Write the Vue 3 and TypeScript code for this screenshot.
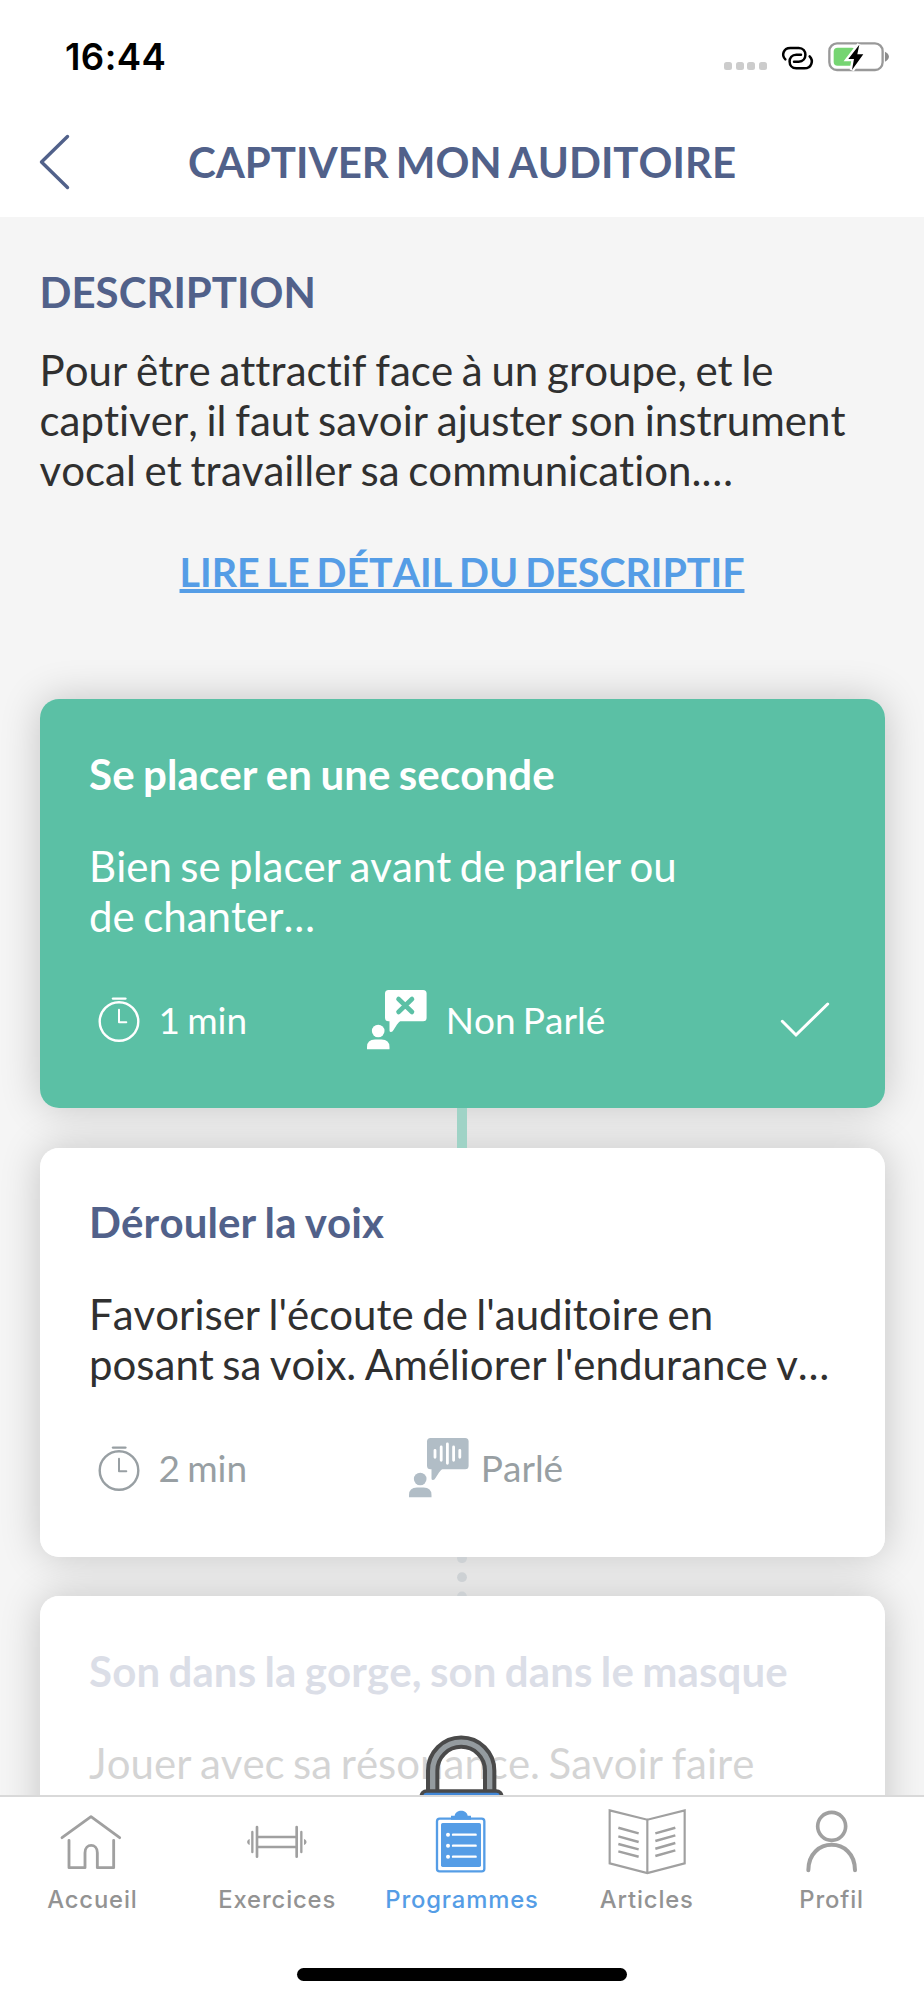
<script setup lang="ts">
interface Lesson {
  title: string
  lines: string[]
  duration?: string
  mode?: 'silent' | 'spoken'
  state: 'done' | 'open' | 'locked'
}

interface Tab {
  id: string
  label: string
  viewBox: string
}

const description: string[] = [
  'Pour être attractif face à un groupe, et le',
  'captiver, il faut savoir ajuster son instrument',
  'vocal et travailler sa communication.…',
]

const lessons: Lesson[] = [
  {
    title: 'Se placer en une seconde',
    lines: ['Bien se placer avant de parler ou', 'de chanter…'],
    duration: '1 min',
    mode: 'silent',
    state: 'done',
  },
  {
    title: 'Dérouler la voix',
    lines: ["Favoriser l'écoute de l'auditoire en", "posant sa voix. Améliorer l'endurance v…"],
    duration: '2 min',
    mode: 'spoken',
    state: 'open',
  },
  {
    title: 'Son dans la gorge, son dans le masque',
    lines: ['Jouer avec sa résonance. Savoir faire'],
    state: 'locked',
  },
]

const tabs: Tab[] = [
  { id: 'home', label: 'Accueil', viewBox: '157 715 240 200' },
  { id: 'exercises', label: 'Exercices', viewBox: '711 715 240 200' },
  { id: 'programs', label: 'Programmes', viewBox: '66 325 240 200' },
  { id: 'articles', label: 'Articles', viewBox: '620 325 240 200' },
  { id: 'profile', label: 'Profil', viewBox: '988 715 240 200' },
]

const activeTab = 'programs'
</script>

<template>
  <div class="screen">
    <header class="top">
      <div class="status">
        <span class="time">16:44</span>
        <div class="indicators">
          <div class="signal"><i v-for="n in 4" :key="n"></i></div>
          <svg class="link-icon" viewBox="955 130 105 85" fill="none" stroke="#000" stroke-width="7.5" stroke-linecap="round">
            <path d="M971 179C959 168 964 145 986 145H1011C1038 145 1038 186 1011 186H997" />
            <path d="M1044 170C1056 182 1051 206 1028 206H1004C977 206 977 165 1004 165H1018" />
          </svg>
          <svg class="battery" viewBox="1095 120 190 100">
            <rect x="1102" y="130" width="160" height="80" rx="23" fill="none" stroke="#999" stroke-width="7" />
            <path d="M1269 155C1276 158 1281 164 1281 170S1276 182 1269 185Z" fill="#8c8c8c" />
            <rect x="1115" y="143" width="66" height="54" rx="12" fill="#76d572" />
            <path d="M1192 134L1159 177H1176L1170 210L1204 163H1186Z" fill="#000" stroke="#fff" stroke-width="14" paint-order="stroke" />
          </svg>
        </div>
      </div>
      <div class="bar">
        <svg class="back" viewBox="0 0 34 58" fill="none" stroke="#51618a" stroke-width="3.4" stroke-linecap="round" stroke-linejoin="round">
          <path d="M30.5 3.5L4.5 29L30.5 54.5" />
        </svg>
        <h1>CAPTIVER MON AUDITOIRE</h1>
      </div>
    </header>

    <main>
      <h2>DESCRIPTION</h2>
      <p class="intro"><span v-for="line in description" :key="line">{{ line }}</span></p>
      <a class="more">LIRE LE DÉTAIL DU DESCRIPTIF</a>

      <section class="lessons">
        <template v-for="(lesson, i) in lessons" :key="lesson.title">
          <div v-if="i === 1" class="joint solid"></div>
          <svg v-if="i === 2" class="joint dotted" viewBox="0 0 10 40">
            <circle cx="5" cy="1.2" r="5" /><circle cx="5" cy="20.4" r="5" /><circle cx="5" cy="40" r="5" />
          </svg>
          <article class="card" :class="lesson.state">
            <h3>{{ lesson.title }}</h3>
            <p><span v-for="line in lesson.lines" :key="line">{{ line }}</span></p>
            <div v-if="lesson.duration" class="meta">
              <div class="duration">
                <svg class="clock" viewBox="0 0 42 46" fill="none" stroke="currentColor" stroke-linecap="round" stroke-linejoin="round">
                  <circle cx="21" cy="25.5" r="19.3" stroke-width="2.4" />
                  <path d="M15 2.6H27.4" stroke-width="2.4" />
                  <path d="M21 13.7V26.2H28.3" stroke-width="2" />
                </svg>
                <span>{{ lesson.duration }}</span>
              </div>
              <div class="mode" :class="lesson.mode">
                <svg class="speech" viewBox="0 0 60 60" fill="currentColor">
                  <rect x="18" y="0" width="41.6" height="31.3" rx="3.5" />
                  <path d="M22.5 30V40.5Q22.5 42 24 42Q25.5 42 26.5 40L30 34.5Q32 31.5 34.5 30Z" />
                  <circle cx="11.2" cy="41" r="6.3" />
                  <path d="M0 59.3V57Q0 49.5 8 49.5H14.5Q22.5 49.5 22.5 57V59.3Z" />
                  <path v-if="lesson.mode === 'silent'" d="M31.5 9L45 22M45 9L31.5 22" stroke="#5bc0a5" stroke-width="4.6" stroke-linecap="round" />
                  <path v-else d="M26 12.3V19.3M32.2 9V22.3M38.4 6V25.3M44.6 9V22.3M50.8 12.3V19.3" stroke="#fff" stroke-width="2.8" stroke-linecap="round" />
                </svg>
                <span>{{ lesson.mode === 'silent' ? 'Non Parlé' : 'Parlé' }}</span>
              </div>
              <svg v-if="lesson.state === 'done'" class="check" viewBox="0 0 50 36" fill="none" stroke="#fff" stroke-width="3" stroke-linecap="round">
                <path d="M2.3 19.3L16 33L47.7 2" />
              </svg>
            </div>
            <svg v-if="lesson.state === 'locked'" class="lock" viewBox="55 100 260 240">
              <path d="M99 275V213A85.5 85.5 0 0 1 270 213V275" fill="none" stroke="#4a4a4a" stroke-width="40" />
              <path d="M99 275V213A85.5 85.5 0 0 1 270 213V275" fill="none" stroke="#949b9f" stroke-width="16" />
              <rect x="65" y="274" width="241" height="180" rx="16" fill="#4287d6" stroke="#4a4a4a" stroke-width="11" />
            </svg>
          </article>
        </template>
      </section>
    </main>

    <nav>
      <div class="tabs">
        <a v-for="tab in tabs" :key="tab.id" :class="{ active: tab.id === activeTab }">
          <svg :viewBox="tab.viewBox" fill="none" stroke="#a0a0a0" stroke-width="8.5" stroke-linecap="round" stroke-linejoin="round">
            <template v-if="tab.id === 'home'">
              <path d="M187 804L274 741L360 804" />
              <path d="M208 812V894H256V849C256 820 293 820 293 849V894H342V812" />
            </template>
            <template v-else-if="tab.id === 'exercises'">
              <path d="M771 772V861M890 772V861M771 802H890M771 832H890" stroke-width="8" />
              <path d="M757 787V847M904 787V847" stroke-width="7" />
              <path d="M749 808C739 811 739 823 749 826ZM912 808C922 811 922 823 912 826Z" fill="#a0a0a0" stroke="none" />
            </template>
            <template v-else-if="tab.id === 'programs'">
              <rect x="111" y="357" width="142" height="158" rx="8" stroke="#559de6" stroke-width="7" />
              <path d="M153 360V348H164C167 328 200 328 203 348H213V360Z" fill="#559de6" stroke="none" />
              <rect x="123" y="370" width="120" height="132" rx="5" fill="#559de6" stroke="none" />
              <path d="M159 405H227M159 438H227M159 471H227" stroke="#fff" stroke-width="7" />
              <path d="M144 405h.1M144 438h.1M144 471h.1" stroke="#fff" stroke-width="12" />
            </template>
            <template v-else-if="tab.id === 'articles'">
              <path d="M628 332L741 360L853 332V491L741 520L628 491ZM741 360V520" stroke-width="6.5" stroke-linejoin="miter" />
              <path d="M654 384L715 401M654 410L715 427M654 433L715 449M654 455L715 471M765 401L825 384M765 424L825 407M765 447L825 430M765 469L825 452" stroke-width="7.5" stroke-linecap="butt" />
            </template>
            <template v-else>
              <circle cx="1107" cy="770" r="42" stroke-width="11" />
              <path d="M1037 902C1037 800 1177 800 1177 902" stroke-width="12" />
            </template>
          </svg>
          <span>{{ tab.label }}</span>
        </a>
      </div>
      <div class="home-bar"></div>
    </nav>
  </div>
</template>

<style>
body {
  margin: 0;
}
</style>

<style scoped>
.screen {
  width: 924px;
  height: 2000px;
  overflow: hidden;
  display: flex;
  flex-direction: column;
  background: #f5f5f5;
  font-family: Lato, sans-serif;
  font-variant-ligatures: none;
  font-kerning: none;
  word-spacing: -2.3px;
  color: #303030;
}
h1, h2, h3, p {
  margin: 0;
  white-space: nowrap;
}
.top {
  height: 217px;
  flex: none;
  background: #fff;
}
.status {
  height: 112px;
  padding: 0 34px 0 65px;
  display: flex;
  justify-content: space-between;
  align-items: center;
  box-sizing: border-box;
}
.time {
  font: 600 36.6px/44px Inter, sans-serif;
  letter-spacing: 0.4px;
  margin-top: 2px;
  color: #000;
}
.indicators {
  display: flex;
  align-items: center;
}
.signal {
  display: flex;
  gap: 3.7px;
  margin: 20px 13.5px 0 0;
}
.signal i {
  width: 7.8px;
  height: 7.5px;
  border-radius: 2.5px;
  background: #ccc;
}
.link-icon {
  width: 35px;
  height: 28.3px;
  margin: 3px 11.5px 0 0;
}
.battery {
  width: 63.3px;
  height: 33.3px;
  margin-top: 2px;
}
.bar {
  height: 105px;
  display: grid;
  grid-template-columns: 150px 1fr 150px;
}
.back {
  width: 34px;
  height: 58px;
  margin: 21px 0 0 37px;
}
h1, h2, h3 {
  font-size: 42px;
  line-height: 50px;
  font-weight: 700;
  color: #51618a;
}
h1 {
  margin-top: 25px;
  text-align: center;
  word-spacing: -3.3px;
}
h3 {
  letter-spacing: 0.12px;
  word-spacing: -2.1px;
}
main {
  flex: 1;
  min-height: 0;
  overflow: hidden;
  padding: 50px 39.5px 0;
  display: flex;
  flex-direction: column;
}
.intro {
  margin-top: 28px;
  word-spacing: -2px;
}
p {
  font-size: 42px;
  line-height: 50px;
}
p span {
  display: block;
}
.more {
  align-self: center;
  margin-top: 53px;
  font-size: 39.4px;
  line-height: 47.3px;
  font-weight: 700;
  color: #559de6;
  word-spacing: -2.7px;
  text-decoration: underline;
  text-decoration-thickness: 3.5px;
  text-underline-offset: 2px;
  text-decoration-skip-ink: none;
  white-space: nowrap;
}
.lessons {
  margin-top: 104px;
  display: flex;
  flex-direction: column;
  isolation: isolate;
}
.card {
  position: relative;
  height: 409px;
  flex: none;
  padding: 49.7px 49.5px 0;
  box-sizing: border-box;
  border-radius: 19px;
  background: #fff;
}
.card::before {
  content: '';
  position: absolute;
  inset: 0;
  z-index: -2;
  border-radius: 19px;
  box-shadow: 0 0 40px rgba(0, 0, 0, 0.2);
}
.card p {
  margin-top: 42px;
}
.done {
  background: #5bc0a5;
}
.done h3,
.done p {
  color: #fff;
}
.locked h3,
.locked p {
  opacity: 0.2;
}
.meta {
  margin-top: 49px;
  height: 60px;
  display: grid;
  grid-template-columns: 200px 394px 1fr;
  align-items: center;
  font-size: 37px;
  line-height: 44px;
  color: #989fa3;
}
.done .meta {
  color: #fff;
}
.duration,
.mode {
  display: flex;
  align-items: center;
}
.duration {
  padding-left: 8.5px;
}
.clock {
  width: 42px;
  height: 46px;
  margin: 0 19px 1px 0;
}
.mode {
  justify-content: center;
}
.speech {
  width: 60px;
  height: 60px;
  margin-right: 19px;
}
.spoken .speech {
  margin-right: 12px;
  color: #b1bdc6;
}
.check {
  justify-self: end;
  width: 50px;
  height: 36px;
  margin-right: 5px;
}
.joint {
  align-self: center;
  width: 10px;
  height: 39.5px;
  flex: none;
}
.solid {
  background: #9fd3c6;
}
.dotted {
  fill: #cdd1d4;
}
.lock {
  position: absolute;
  left: 50%;
  top: 137px;
  width: 86.7px;
  height: 80px;
  margin-left: -43.8px;
}
nav {
  position: relative;
  z-index: 1;
  height: 205.5px;
  flex: none;
  box-sizing: border-box;
  border-top: 2px solid #d9d9d9;
  background: #fff;
  display: flex;
  flex-direction: column;
  align-items: center;
}
.tabs {
  width: 100%;
  display: grid;
  grid-template-columns: repeat(5, 1fr);
  padding-top: 11.5px;
}
.tabs a {
  display: flex;
  flex-direction: column;
  align-items: center;
  font: 500 23.8px/30px Inter, sans-serif;
  letter-spacing: 0.85px;
  color: #939393;
}
.tabs a.active {
  color: #559de6;
}
.tabs svg {
  width: 80px;
  height: 66.7px;
  margin-bottom: 10.5px;
}
.home-bar {
  width: 330px;
  height: 13px;
  margin-top: 53px;
  border-radius: 7px;
  background: #000;
}
</style>
